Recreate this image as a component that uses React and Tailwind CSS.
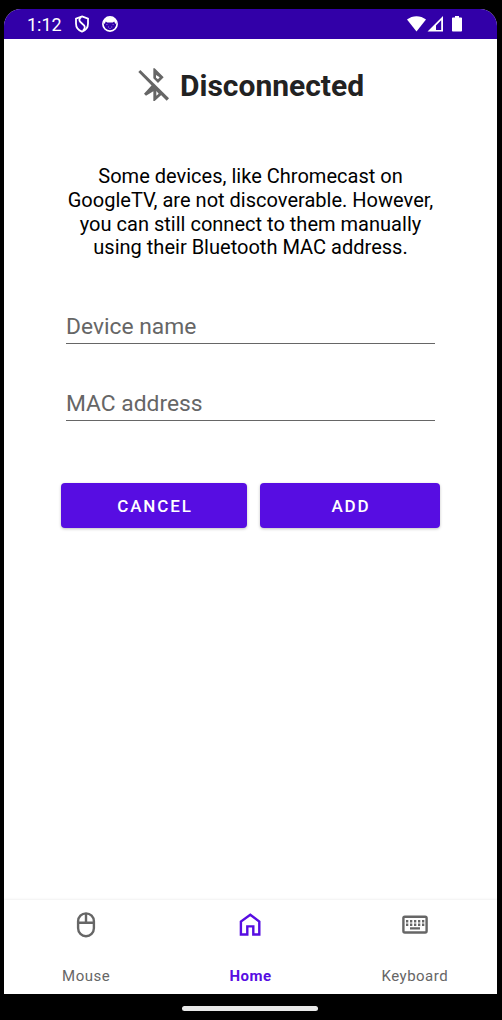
function ShieldIcon() {
  return (
    <svg className="h-[18px] w-[16px]" viewBox="0 0 16 18" fill="none" stroke="#fff" strokeWidth="1.8">
      <path d="M8 1.4 14 3.6V8.5C14 12.5 11.3 15.4 8 16.6 4.7 15.4 2 12.5 2 8.5V3.6Z" />
      <path d="M7.2 2C5 3.6 4.8 5.4 6.4 7L10 10.4C11.2 11.8 11 14 9 15.6" />
    </svg>
  );
}

function CatIcon() {
  return (
    <svg className="h-[18px] w-[18px]" viewBox="0 0 18 18">
      <circle cx="9" cy="9" r="7.1" fill="none" stroke="#fff" strokeWidth="1.7" />
      <path d="M2.2 7C3.6.6 14.4.6 15.8 7L14.4 9 13.2 6.4 11.8 7.4H6.2L4.8 6.4 3.6 9Z" fill="#fff" />
      <path d="M5.4 9h1v1h-1zM11.6 9h1v1h-1zM7 11.5h1v1H7zM10.2 11.5h1v1h-1zM8.5 13h1v1h-1z" fill="#9a80dc" />
    </svg>
  );
}

function StatusBar() {
  return (
    <div className="flex h-[30px] shrink-0 items-center bg-[#3200a8] pl-[23px] text-white">
      <span className="w-[47px] pt-[2px] text-[18px] leading-[28px]">1:12</span>
      <ShieldIcon />
      <span className="w-[11px]" />
      <CatIcon />
      <svg className="ml-[288px] h-[18px] w-[56px]" viewBox="0 0 56 18" fill="#fff">
        <path d="M0 4.6C5.5 0 13.5 0 19 4.6L9.5 16.5Z" />
        <path fillRule="evenodd" d="M20.5 16.5 36 1V16.5ZM29 15H34.2V5.2L29 10.4Z" />
        <path d="M48 1h4v1.5h2.2q.8 0 .8.8v12.4q0 .8-.8.8h-8.4q-.8 0-.8-.8V3.3q0-.8.8-.8H48Z" />
      </svg>
    </div>
  );
}

function BluetoothOffIcon() {
  return (
    <svg className="h-[36px] w-[34px]" viewBox="0 0 102 108" fill="#666">
      <path d="M7 15 13 9 99 94 92 101Z" />
      <path fillRule="evenodd" d="M52 4H56L83 31 66 48 52 34ZM60 24V32L66 37 71 31Z" />
      <path fillRule="evenodd" d="M50 52 80 80 56 102H52V73L30 86 24 80ZM61 72V86L68 80Z" />
    </svg>
  );
}

function Field({ label }) {
  return (
    <input
      type="text"
      placeholder={label}
      aria-label={label}
      className="block h-[36px] w-full border-b border-[#666] bg-transparent pt-[2px] text-[22.8px] text-[#222] outline-none placeholder:text-[#666]"
    />
  );
}

function MouseIcon() {
  return (
    <svg className="h-[26px] w-[20px]" viewBox="0 0 20 26" fill="none" stroke="#666" strokeWidth="2.4">
      <rect x="2.1" y="1.4" width="15.8" height="22.8" rx="7.9" />
      <path d="M2 10.8h16M10 1v10" />
    </svg>
  );
}

function HomeIcon() {
  return (
    <svg className="h-[26px] w-[22px]" viewBox="0 0 22 26" fill="none" stroke="#570de2" strokeWidth="2.4">
      <path d="M1.9 22.5V9.5L11.3 2.8 20.3 9.5V22.5H14.3V14.4H8.3V22.5Z" />
    </svg>
  );
}

function KeyboardIcon() {
  return (
    <svg className="h-[26px] w-[26px]" viewBox="0 0 26 26">
      <rect x="1.4" y="4.7" width="23.2" height="15.8" rx="1.4" fill="none" stroke="#666" strokeWidth="2.4" />
      <path
        d="M4 8h2.3v2.4H4zM8 8h2.3v2.4H8zM12 8h2.3v2.4H12zM16 8h2.3v2.4H16zM20 8h2.3v2.4H20zM4 11.6h2.3v2.4H4zM8 11.6h2.3v2.4H8zM12 11.6h2.3v2.4H12zM16 11.6h2.3v2.4H16zM20 11.6h2.3v2.4H20zM8 15.2h10v2.4H8z"
        fill="#666"
      />
    </svg>
  );
}

function Tab({ icon, label, active }) {
  return (
    <button
      type="button"
      className={
        active
          ? "flex flex-col items-center pt-[12px] font-bold text-[#570de2]"
          : "flex flex-col items-center pt-[12px] text-[#666]"
      }
    >
      {icon}
      <span className="mt-[28px] text-[15px] leading-[20px] tracking-[0.5px]">{label}</span>
    </button>
  );
}

export default function App() {
  return (
    <div className="flex h-[1020px] w-[502px] flex-col bg-black pt-[9px] pr-[5px] pl-[4px] font-['Roboto',sans-serif]">
      <div className="flex h-[985px] flex-col overflow-hidden rounded-t-[17px] bg-white">
        <StatusBar />
        <main className="flex flex-1 flex-col">
          <header className="mt-[28px] ml-[132px] flex h-[36px] items-center">
            <BluetoothOffIcon />
            <h1 className="ml-[10px] pt-[2px] text-[30px] leading-[36px] font-bold whitespace-nowrap text-[#222]">Disconnected</h1>
          </header>
          <p className="mt-[62px] text-center text-[20.05px] leading-[23.75px] text-black">
            Some devices, like Chromecast on
            <br />
            GoogleTV, are not discoverable. However,
            <br />
            you can still connect to them manually
            <br />
            using their Bluetooth MAC address.
          </p>
          <form className="mt-[48.2px] flex flex-col pr-[57px] pl-[57px]">
            <div className="flex flex-col gap-[41px] px-[5px]">
              <Field label="Device name" />
              <Field label="MAC address" />
            </div>
            <div className="mt-[62px] flex gap-[13px] text-[17px] font-medium text-white">
              <button type="button" className="h-[45px] w-[186px] rounded-[4px] bg-[#570de2] pt-[2px] pl-[2px] tracking-[1.9px] shadow-[0_1px_3px_rgba(0,0,0,0.25)]">
                CANCEL
              </button>
              <button type="button" className="h-[45px] w-[180px] rounded-[4px] bg-[#570de2] pt-[2px] pl-[2px] tracking-[1.9px] shadow-[0_1px_3px_rgba(0,0,0,0.25)]">
                ADD
              </button>
            </div>
          </form>
        </main>
        <nav className="grid h-[94px] shrink-0 grid-cols-3 bg-white shadow-[0_-1px_2px_rgba(0,0,0,0.06)]">
          <Tab icon={<MouseIcon />} label="Mouse" />
          <Tab icon={<HomeIcon />} label="Home" active />
          <Tab icon={<KeyboardIcon />} label="Keyboard" />
        </nav>
      </div>
      <div className="mt-[12px] ml-[178px] h-[5px] w-[136px] rounded-full bg-[#e8e8e8]" />
    </div>
  );
}
